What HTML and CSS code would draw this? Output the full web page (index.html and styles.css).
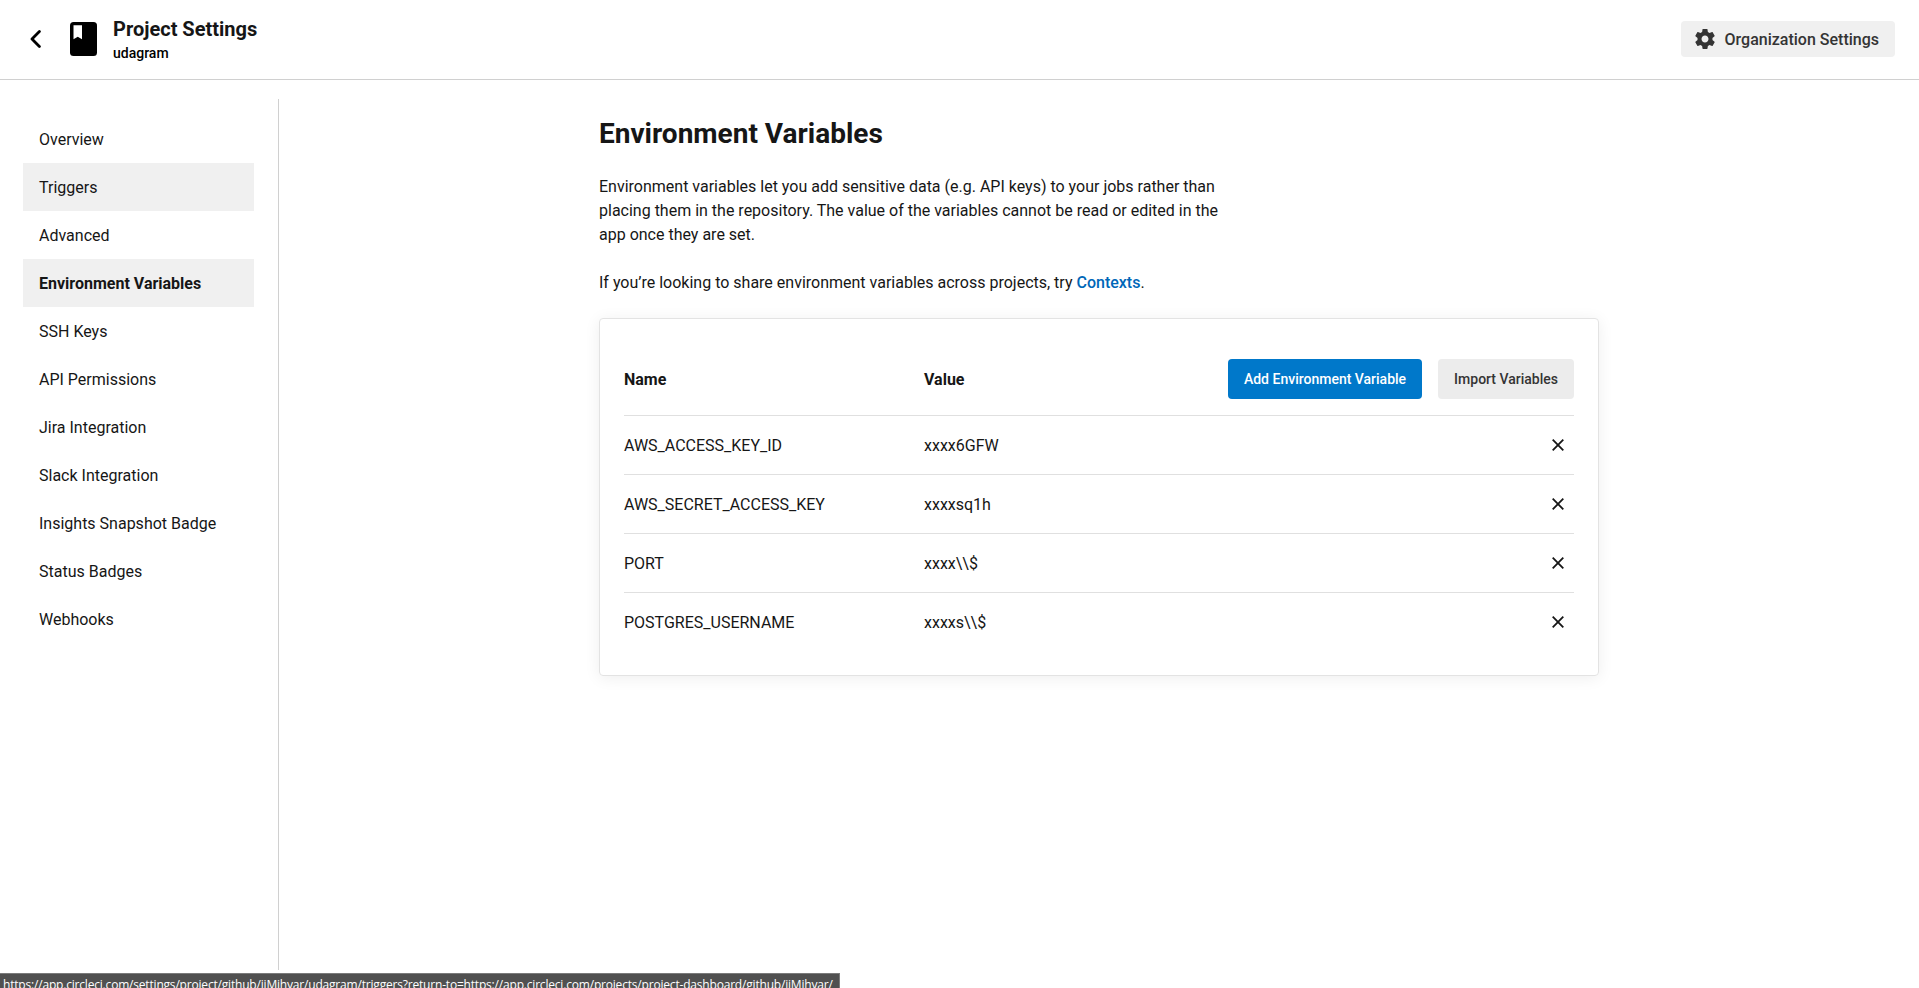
FILE: index.html
```html
<!DOCTYPE html>
<html lang="en">
<head>
<meta charset="utf-8">
<title>Project Settings</title>
<link rel="stylesheet" href="styles.css">
</head>
<body>
<header class="topbar">
  <a class="back"><svg width="12" height="20" viewBox="0 0 12 20" fill="none" stroke="#000" stroke-width="2.8" stroke-linecap="round" stroke-linejoin="round"><path d="M10.4 2.6 3 10l7.400 7.400"/></svg></a>
  <svg class="repo" width="27" height="34" viewBox="0 0 27 34"><rect width="27" height="34" rx="3.5" fill="#000"/><path d="M3.500 3.300h8.500v14L7.750 14.800l-4.250 2.500z" fill="#fff"/></svg>
  <div class="titles">
    <div class="project-title">Project Settings</div>
    <div class="project-name">udagram</div>
  </div>
  <a class="org-button">
    <svg width="24" height="24" viewBox="0 0 24 24" fill="#343434"><path d="M19.43 12.98c.04-.32.07-.64.07-.98s-.03-.66-.07-.98l2.11-1.65c.19-.15.24-.42.12-.64l-2-3.46c-.12-.22-.39-.3-.61-.22l-2.49 1c-.52-.4-1.08-.73-1.69-.98l-.38-2.65C14.46 2.18 14.25 2 14 2h-4c-.25 0-.46.18-.49.42l-.38 2.65c-.61.25-1.17.59-1.69.98l-2.49-1c-.23-.09-.49 0-.61.22l-2 3.46c-.13.22-.07.49.12.64l2.11 1.65c-.04.32-.07.65-.07.98s.03.66.07.98l-2.11 1.65c-.19.15-.24.42-.12.64l2 3.46c.12.22.39.3.61.22l2.49-1c.52.4 1.08.73 1.69.98l.38 2.65c.03.24.24.42.49.42h4c.25 0 .46-.18.49-.42l.38-2.65c.61-.25 1.17-.59 1.69-.98l2.49 1c.23.09.49 0 .61-.22l2-3.46c.12-.22.07-.49-.12-.64l-2.11-1.65zM12 15.5c-1.93 0-3.5-1.57-3.5-3.5s1.57-3.5 3.5-3.5 3.5 1.57 3.5 3.5-1.57 3.5-3.5 3.5z"/></svg>
    <span>Organization Settings</span>
  </a>
</header>
<div class="layout">
  <nav class="sidebar">
    <a class="nav-item">Overview</a>
    <a class="nav-item hovered">Triggers</a>
    <a class="nav-item">Advanced</a>
    <a class="nav-item active">Environment Variables</a>
    <a class="nav-item">SSH Keys</a>
    <a class="nav-item">API Permissions</a>
    <a class="nav-item">Jira Integration</a>
    <a class="nav-item">Slack Integration</a>
    <a class="nav-item">Insights Snapshot Badge</a>
    <a class="nav-item">Status Badges</a>
    <a class="nav-item">Webhooks</a>
  </nav>
  <main class="content">
    <h1>Environment Variables</h1>
    <p>Environment variables let you add sensitive data (e.g. API keys) to your jobs rather than placing them in the repository. The value of the variables cannot be read or edited in the app once they are set.</p>
    <p class="hint">If you’re looking to share environment variables across projects, try <a class="link">Contexts</a>.</p>
    <section class="card">
      <div class="row head">
        <span class="name">Name</span><span class="value">Value</span>
        <button class="btn primary">Add Environment Variable</button>
        <button class="btn secondary">Import Variables</button>
      </div>
      <div class="row"><span class="name">AWS_ACCESS_KEY_ID</span><span class="value">xxxx6GFW</span><svg class="remove" viewBox="0 0 12 12"><path d="M.7.7l10.600 10.600M11.300.7.7 11.300"/></svg></div>
      <div class="row"><span class="name">AWS_SECRET_ACCESS_KEY</span><span class="value">xxxxsq1h</span><svg class="remove" viewBox="0 0 12 12"><path d="M.7.7l10.600 10.600M11.300.7.7 11.300"/></svg></div>
      <div class="row"><span class="name">PORT</span><span class="value">xxxx\\$</span><svg class="remove" viewBox="0 0 12 12"><path d="M.7.7l10.600 10.600M11.300.7.7 11.300"/></svg></div>
      <div class="row"><span class="name">POSTGRES_USERNAME</span><span class="value">xxxxs\\$</span><svg class="remove" viewBox="0 0 12 12"><path d="M.7.7l10.600 10.600M11.300.7.7 11.300"/></svg></div>
    </section>
  </main>
</div>
<div class="link-status">https://app.circleci.com/settings/project/github/jiMihyar/udagram/triggers?return-to=https://app.circleci.com/projects/project-dashboard/github/jiMihyar/</div>
</body>
</html>
```

FILE: styles.css
```css
* { box-sizing: border-box; }

body {
  margin: 0;
  height: 988px;
  overflow: hidden;
  display: flex;
  flex-direction: column;
  background: #fff;
  color: #161616;
  font: 16px/24px Roboto, "Liberation Sans", sans-serif;
}

svg { display: block; flex: none; }

.topbar {
  height: 80px;
  flex: none;
  display: flex;
  align-items: center;
  padding: 0 24px 1px 29px;
  border-bottom: 1px solid #d0d0d0;
}

.repo { margin-left: 28.5px; }

.titles { margin-left: 16.5px; }

.project-title {
  font-size: 20px;
  font-weight: 700;
  line-height: 28px;
}

.project-name {
  color: #000;
  font-size: 14px;
  font-weight: 500;
  line-height: 20px;
}

.org-button {
  display: flex;
  align-items: center;
  gap: 8px;
  height: 36px;
  margin-left: auto;
  padding: 0 16px 0 12px;
  border-radius: 4px;
  background: #f0f0f0;
  color: #343434;
  font-weight: 500;
}

.org-button span { padding-top: 2px; }

.layout {
  flex: 1;
  display: flex;
  padding: 19px 0 18px;
}

.sidebar {
  width: 279px;
  flex: none;
  padding: 16px 24px 0 23px;
  border-right: 1px solid #d0d0d0;
}

.nav-item {
  display: block;
  height: 48px;
  padding: 13px 16px 11px;
}

.hovered,
.active { background: #f0f0f0; }

.active { font-weight: 700; }

.content {
  width: 1000px;
  margin: 0 auto;
  padding-top: 15px;
}

h1 {
  margin: 0 0 21px;
  font-size: 28px;
  font-weight: 700;
  line-height: 40px;
}

p {
  width: 640px;
  margin: 0 0 24px;
}

.hint { margin-bottom: 23px; }

.link {
  color: #0067b8;
  font-weight: 500;
}

.card {
  height: 358px;
  padding: 24px;
  border: 1px solid #e3e3e3;
  border-radius: 4px;
  box-shadow: 0 2px 16px rgba(0, 0, 0, 0.07);
}

.row {
  display: flex;
  align-items: center;
  height: 59px;
  border-top: 1px solid #e0e0e0;
}

.head {
  height: 72px;
  border: 0;
}

.name,
.value { padding-top: 2px; }

.head .name,
.head .value { font-weight: 700; }

.name { width: 300px; }

.value { flex: 1; }

.btn {
  height: 40px;
  margin-left: 16px;
  padding: 0 16px;
  border: 0;
  border-radius: 4px;
  font: 500 14px/20px Roboto, "Liberation Sans", sans-serif;
}

.primary {
  background: #0078ca;
  color: #fff;
}

.secondary {
  background: #ececec;
  color: #343434;
}

.remove {
  width: 12px;
  height: 12px;
  margin-right: 10px;
  fill: none;
  stroke: #161616;
  stroke-width: 1.8;
  overflow: visible;
}

.link-status {
  position: absolute;
  left: 0;
  top: 973px;
  width: 840px;
  height: 15px;
  overflow: hidden;
  padding: 3px 0 0 3px;
  border-top: 1px solid #7b7b7b;
  border-right: 1px solid #7b7b7b;
  background: #505050;
  color: #fff;
  font: 12px/16px "Open Sans", "Noto Sans", sans-serif;
  letter-spacing: -0.19px;
  white-space: nowrap;
}
```
